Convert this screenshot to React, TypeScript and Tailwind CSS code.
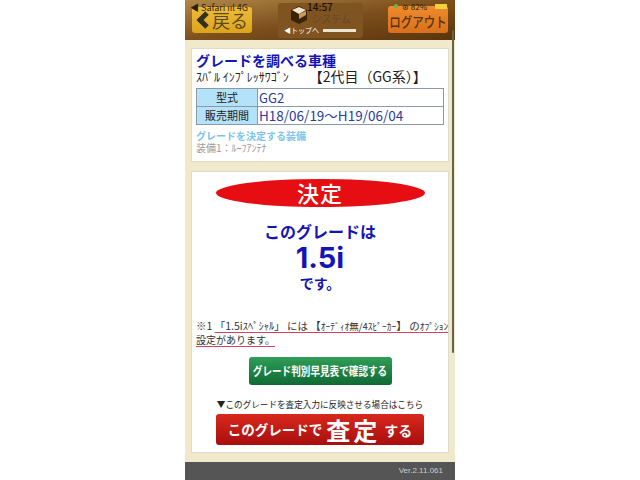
const jp = "font-['Noto_Sans_CJK_JP',sans-serif]";

function HeaderBar() {
  return (
    <div className="relative h-[40px] shrink-0 bg-gradient-to-br from-[#b08848] via-[#7d4f1c] to-[#5a340c] flex items-start pl-[7px] pr-[7px] pt-[3px] justify-between">
      {/* back */}
      <div className="w-[60px] h-[26px] mt-[4px] rounded-[3px] bg-gradient-to-b from-[#eebc38] to-[#dca41c] flex items-center pl-[3px] text-[#5a4a20] overflow-hidden">
        <svg width="17" height="18" viewBox="0 0 17 18" className="shrink-0">
          <path d="M12 2 L5 9 L12 16" fill="none" stroke="#33301f" strokeWidth="5" />
        </svg>
        <span className="text-[18px] leading-none whitespace-nowrap">戻る</span>
      </div>
      {/* top */}
      <div className="w-[85px] h-[35px] rounded-[3px] bg-[#7f5420] flex flex-col items-center pt-[2px]">
        <div className="flex items-start h-[20px] pl-[1px]">
          <svg width="18" height="20" viewBox="0 0 18 20" className="shrink-0">
            <path d="M9 1 L17 5 L17 15 L9 19 L1 15 L1 5 Z" fill="#3a2408" />
            <path d="M9 2 L16 5 L9 9 L2 5 Z" fill="#efe4c8" />
            <path d="M9 9 L16 6 L16 10 L9 14 Z" fill="#c79a58" />
          </svg>
          <span className="text-[10px] mt-[9px] ml-[3px] leading-none text-[#5f4a28] whitespace-nowrap">システム</span>
        </div>
        <div className="flex items-center gap-[4px] h-[10px]">
          <span className="text-[7px] leading-none text-white whitespace-nowrap">◀トップへ</span>
          <span className="w-[33px] h-[3px] bg-[#ece4d2]" />
        </div>
      </div>
      {/* logout */}
      <div className="w-[60px] h-[27px] mt-[3px] rounded-[3px] bg-gradient-to-b from-[#ee8c2c] to-[#d9701c] flex items-center justify-center pt-[3px] overflow-hidden">
        <span className="inline-block shrink-0 scale-x-[0.82] text-[14px] leading-none font-medium text-[#5a3010] whitespace-nowrap">ログアウト</span>
      </div>

      {/* iOS status bar on top of the header */}
      <div className="absolute inset-x-0 top-0 h-[10px] text-[9px] leading-none text-[#2a2010]">
        <span className="absolute left-[5px] top-[3px] whitespace-nowrap">◀ Safari ııl 4G</span>
        <span className="absolute left-[122px] top-[2px] text-[10px] font-medium text-[#1a1208] whitespace-nowrap">14:57</span>
        <span className="absolute left-[209px] top-[4px] w-[4px] h-[4px] rounded-full bg-[#5cc040]" />
        <span className="absolute left-[217px] top-[3px] text-[8px] whitespace-nowrap">⊛ 82%</span>
        <span className="absolute left-[250px] top-[4px] w-[12px] h-[5px] bg-[#f0d040]" />
      </div>
    </div>
  );
}

export default function App() {
  return (
    <div className={`w-[640px] h-[480px] bg-white flex justify-center overflow-hidden ${jp}`}>
      <div className="w-[270px] h-full flex flex-col bg-[#f0e9cc] relative">
        <HeaderBar />

        <div className="flex-1 flex flex-col gap-[9px] pt-[8px] px-[6px]">
          {/* vehicle card */}
          <div className="h-[114px] bg-white border border-[#e0dcc8] px-[4px] pt-[2px]">
            <div className="text-[14px] leading-[18px] font-bold text-[#1414b4]">グレードを調べる車種</div>
            <div className="text-[14px] leading-[14px] text-[#222] whitespace-nowrap">
              <span className="text-[12px]">ｽﾊﾞﾙ ｲﾝﾌﾟﾚｯｻﾜｺﾞﾝ</span>
              <span className="ml-[20px]">【2代目（GG系）】</span>
            </div>
            <table className="mt-[4px] w-[248px] border-collapse leading-none table-fixed">
              <tbody>
                <tr className="h-[18px]">
                  <td className="w-[61px] border border-[#8a9aa8] bg-[#b4e2f8] text-center text-[11px] text-[#222]">型式</td>
                  <td className="border border-[#8a9aa8] text-[13px] text-[#2a3aa0] pl-[1px]">GG2</td>
                </tr>
                <tr className="h-[18px]">
                  <td className="border border-[#8a9aa8] bg-[#b4e2f8] text-center text-[11px] text-[#222]">販売期間</td>
                  <td className="border border-[#8a9aa8] text-[13.5px] text-[#2a3aa0] pl-[1px] whitespace-nowrap">H18/06/19～H19/06/04</td>
                </tr>
              </tbody>
            </table>
            <div className="mt-[4px] text-[10px] leading-[13px] font-bold text-[#7cc4ec]">グレードを決定する装備</div>
            <div className="text-[10px] leading-[12px] text-[#999]">
              装備1：<span className="text-[10px]">ﾙｰﾌｱﾝﾃﾅ</span>
            </div>
          </div>

          {/* result card */}
          <div className="h-[282px] bg-white border border-[#e0dcc8] px-[4px] flex flex-col">
            <div className="mx-auto mt-[7px] w-[209px] h-[28px] rounded-[50%] bg-[#e60e12] flex items-center justify-center text-white text-[22px] leading-none font-medium tracking-[1px] pb-[2px]">決定</div>
            <div className="mt-[13px] text-center text-[#1414b4] font-bold">
              <div className="text-[16px] leading-[22px]">このグレードは</div>
              <div className="text-[29px] leading-[32px] font-['Inter',sans-serif]">1.5i</div>
              <div className="text-[14px] leading-[18px]">です。</div>
            </div>
            <div className="mt-[27px] text-[10.5px] leading-[14px] text-[#333] whitespace-nowrap">
              <div>
                ※1 <span className="underline decoration-[#d84060] underline-offset-[2px]">「1.5iｽﾍﾟｼｬﾙ」 には 【<span className="text-[9.5px]">ｵｰﾃﾞｨｵ無/4ｽﾋﾟｰｶｰ</span>】 の<span className="text-[9.5px]">ｵﾌﾟｼｮﾝ</span></span>
              </div>
              <div className="text-[10px]">
                <span className="underline decoration-[#d84060] underline-offset-[2px]">設定があります。</span>
              </div>
            </div>
            <div className="mx-auto mt-[10px] w-[143px] h-[28px] rounded-[3px] bg-gradient-to-b from-[#2f9e58] to-[#0f6a34] flex items-center justify-center overflow-hidden">
              <span className="inline-block shrink-0 scale-x-[0.8] text-white text-[12px] font-bold leading-none whitespace-nowrap">グレード判別早見表で確認する</span>
            </div>
            <div className="mt-[13px] text-center text-[8.6px] leading-[12px] text-[#222] whitespace-nowrap">▼このグレードを査定入力に反映させる場合はこちら</div>
            <div className="mx-auto mt-[4px] w-[208px] h-[31px] rounded-[3px] bg-gradient-to-b from-[#d8281c] to-[#a80e0e] flex items-center justify-center text-white font-bold leading-none whitespace-nowrap">
              <span className="text-[13.5px]">このグレードで</span>
              <span className="text-[24px] mx-[4px] tracking-[3px]">査定</span>
              <span className="text-[14px]">する</span>
            </div>
          </div>
        </div>

        {/* scrollbar thumb */}
        <div className="absolute right-[1px] top-[30px] w-[2px] h-[323px] rounded-full bg-[#6a6050]" />

        <div className="h-[18px] shrink-0 bg-[#555] flex items-center justify-end pr-[12px] text-[8px] leading-none text-[#ccc] font-['Liberation_Sans',sans-serif]">Ver.2.11.061</div>
      </div>
    </div>
  );
}
